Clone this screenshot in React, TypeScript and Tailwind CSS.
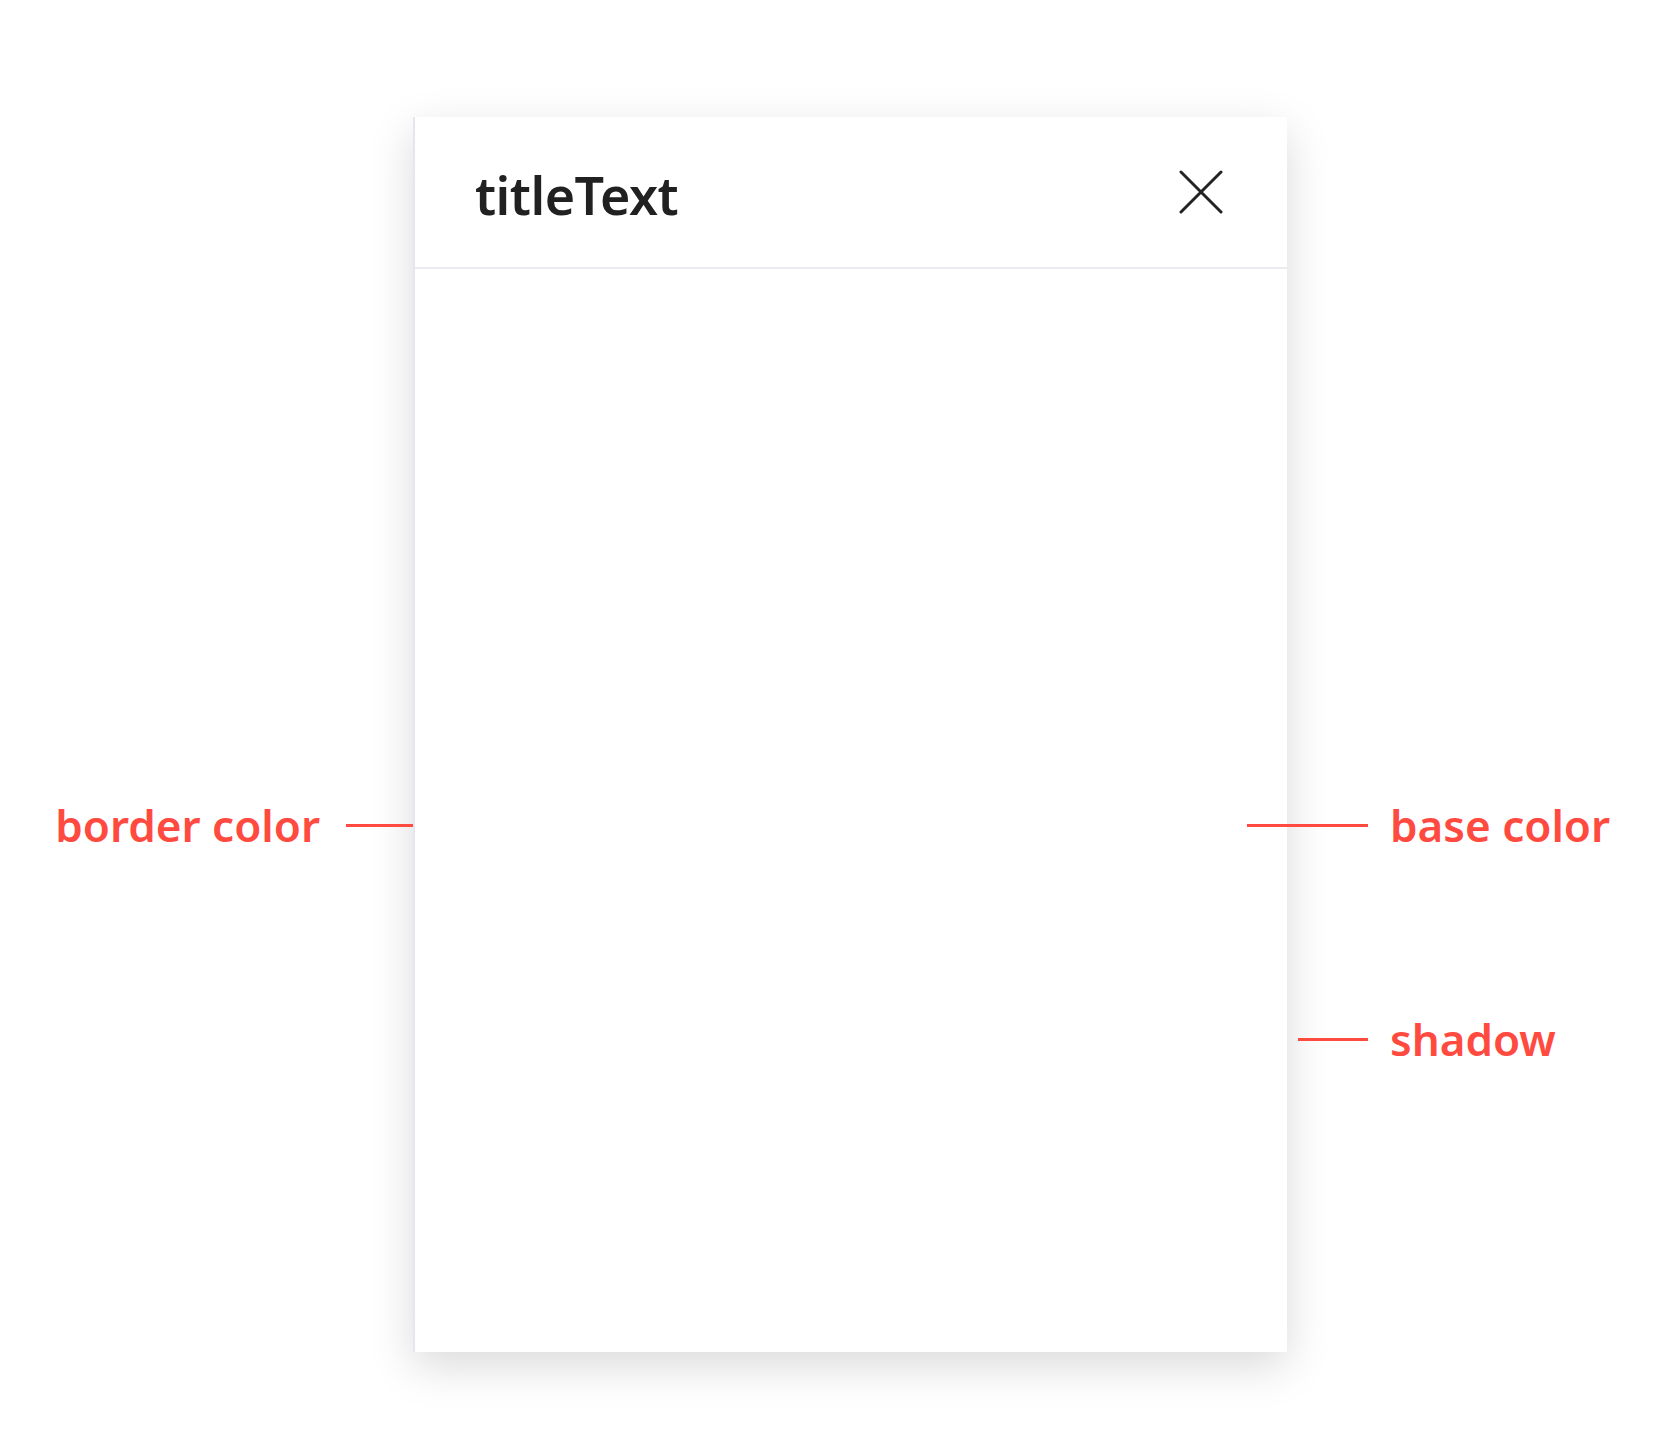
import React from "react";

function Callout({ label, lineW, reverse, className }: { label: string; lineW: string; reverse?: boolean; className: string }) {
  return (
    <div className={`absolute flex items-center ${reverse ? "flex-row-reverse gap-[26px]" : "gap-[22px]"} ${className}`}>
      <div className={`${lineW} h-[3px] bg-[#ff4a3f]`} />
      <span className="text-[44px] font-semibold text-[#ff4a3f] leading-[48px]">{label}</span>
    </div>
  );
}

export default function App() {
  const font = { fontFamily: '"Noto Sans", "Open Sans", sans-serif' };
  return (
    <div className="relative w-[1678px] h-[1454px] bg-white overflow-hidden" style={font}>
      <div className="pt-[117px] pl-[413px]">
        <div className="w-[874px] h-[1235px] bg-white border-l-2 border-[#e6e6ef] shadow-[0_14px_42px_rgba(0,0,0,0.15)] flex flex-col">
          <div className="h-[152px] flex items-center justify-between pl-[60px] pr-[64px] border-b-2 border-[#ebebf0]">
            <span className="text-[52px] font-semibold text-[#212121] tracking-[-0.5px] leading-none mt-[6px]">titleText</span>
            <svg width="44" height="44" viewBox="0 0 44 44" className="mt-[0px]">
              <path d="M2 2 L42 42 M42 2 L2 42" stroke="#222" strokeWidth="3" strokeLinecap="round" />
            </svg>
          </div>
          <div className="flex-1" />
        </div>
      </div>

      <Callout label="border color" lineW="w-[67px]" reverse className="right-[1265px] top-[801px]" />
      <Callout label="base color" lineW="w-[121px]" className="left-[1247px] top-[801px]" />
      <Callout label="shadow" lineW="w-[70px]" className="left-[1298px] top-[1015px]" />
    </div>
  );
}
